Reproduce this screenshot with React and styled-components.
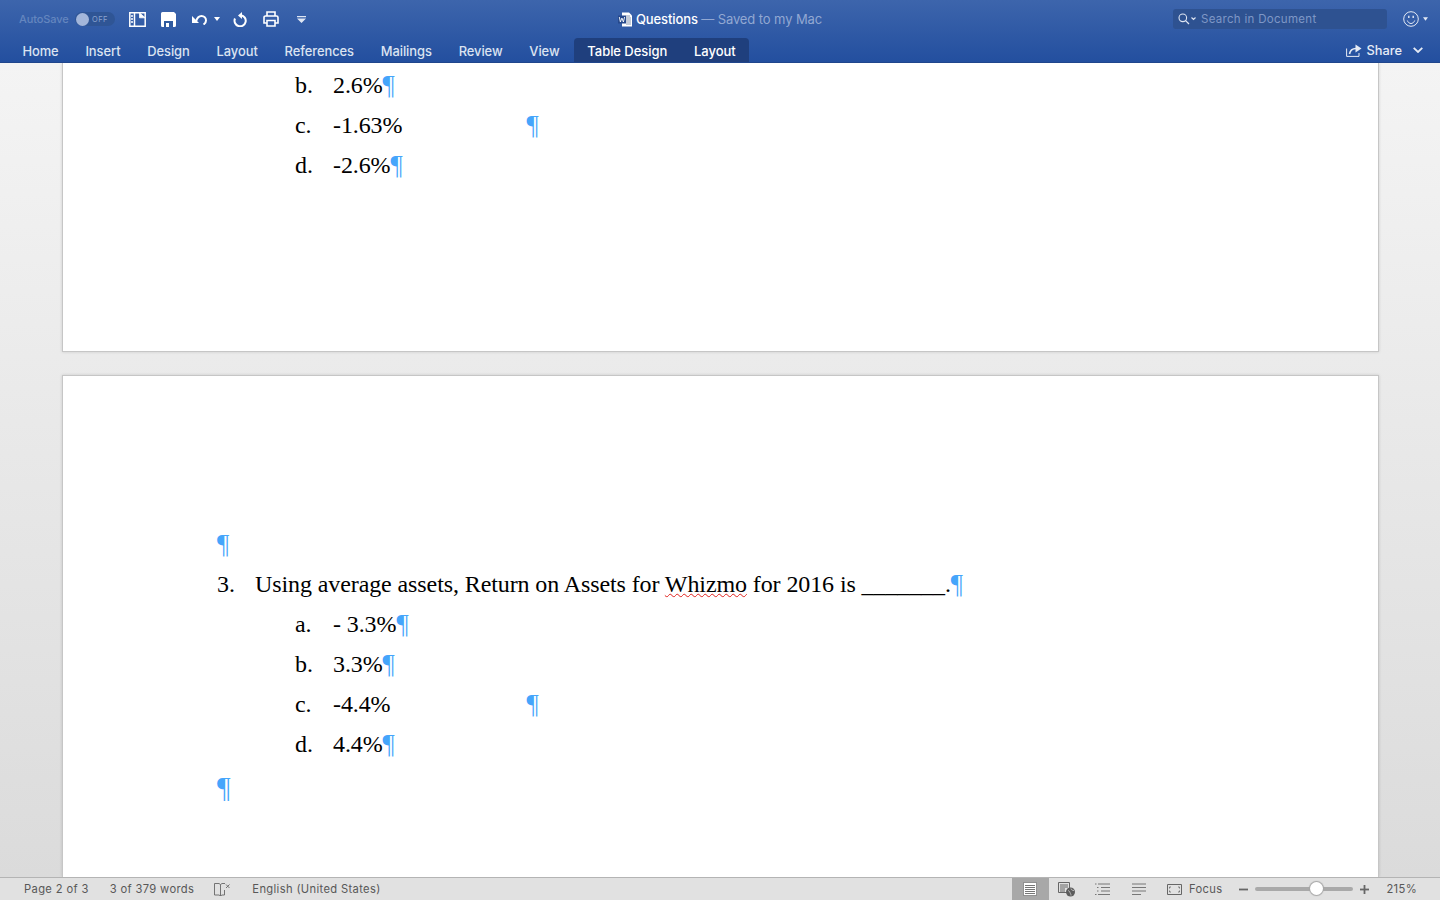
import React from 'react';
import styled, { createGlobalStyle } from 'styled-components';

const GlobalStyle = createGlobalStyle`
  html, body {
    margin: 0;
    height: 100%;
    overflow: hidden;
  }
  #root {
    height: 100%;
  }
`;

const uiFont = `Inter, "Liberation Sans", sans-serif`;

const Window = styled.div`
  height: 900px;
  display: flex;
  flex-direction: column;
  font-family: ${uiFont};
`;

const Ribbon = styled.header`
  height: 63px;
  flex: none;
  display: flex;
  flex-direction: column;
  background: linear-gradient(#3d65ac, #234f9f);
  border-bottom: 1px solid #20468c;
  box-sizing: border-box;
  color: #fff;
`;

const TitleRow = styled.div`
  height: 38px;
  display: grid;
  grid-template-columns: 1fr auto 1fr;
  align-items: center;
`;

const QuickAccess = styled.div`
  display: flex;
  align-items: center;
  padding-left: 19px;
`;

const AutoSave = styled.span`
  font-size: 11px;
  font-weight: 500;
  letter-spacing: -0.1px;
  color: #6486bf;
  width: 56px;
`;

const Toggle = styled.span`
  width: 40px;
  height: 14px;
  border-radius: 7px;
  background: #2f5595;
  display: flex;
  align-items: center;
  gap: 3px;
  font-size: 7.5px;
  letter-spacing: 0.4px;
  color: #8ba3cf;
  margin-right: 14px;
`;

const Knob = styled.i`
  width: 13px;
  height: 13px;
  margin-left: 1px;
  border-radius: 50%;
  background: #a3b6da;
`;

const ToolIcon = styled.svg`
  display: block;
  flex: none;
  margin-left: ${({ $gap }) => $gap || 0}px;
`;

const Title = styled.div`
  display: flex;
  align-items: center;
  font-size: 13px;
  font-weight: 500;
  letter-spacing: -0.1px;
  gap: 3px;
`;

const Saved = styled.span`
  color: #92a8d2;
  font-weight: 400;
`;

const SearchArea = styled.div`
  display: flex;
  justify-content: flex-end;
  align-items: center;
  padding-right: 12px;
`;

const SearchBox = styled.div`
  width: 214px;
  height: 20px;
  border-radius: 3px;
  background: #2e5291;
  display: flex;
  align-items: center;
  padding-left: 5px;
  box-sizing: border-box;
  font-size: 11.5px;
  letter-spacing: 0.3px;
  color: #7e97c6;
  gap: 4px;
  margin-right: 16px;
`;

const TabRow = styled.nav`
  flex: 1;
  display: flex;
  align-items: stretch;
  padding-left: 9px;
`;

const Tab = styled.span`
  padding: 0 13.4px;
  display: flex;
  align-items: center;
  padding-top: 2px;
  font-size: ${({ $active }) => ($active ? 13 : 12.9)}px;
  font-weight: 500;
  letter-spacing: -0.05px;
  color: ${({ $active }) => ($active ? '#fff' : '#dbe3f1')};
`;

const ContextGroup = styled.div`
  display: flex;
  background: #1f3f7d;
  border-radius: 4px 4px 0 0;
  margin-left: 1px;
`;

const ShareArea = styled.div`
  margin-left: auto;
  display: flex;
  align-items: center;
  gap: 5px;
  padding-right: 17px;
  font-size: 12.8px;
  font-weight: 500;
  color: #e6ebf5;
`;

const Canvas = styled.main`
  flex: 1;
  min-height: 0;
  overflow: hidden;
  padding: 0 61px 0 62px;
  display: flex;
  flex-direction: column;
  gap: 23px;
  background: linear-gradient(#f4f4f4, #dbdbdb);
`;

const Page = styled.section`
  flex: ${({ $fill }) => ($fill ? 1 : 'none')};
  height: ${({ $height }) => ($height ? `${$height}px` : 'auto')};
  box-sizing: border-box;
  background: #fff;
  border: 1px solid #c6c6c6;
  border-top-width: ${({ $open }) => ($open ? 0 : 1)}px;
  border-bottom-width: ${({ $fill }) => ($fill ? 0 : 1)}px;
  box-shadow: 0 0 3px rgba(0, 0, 0, 0.14);
  padding: ${({ $top }) => $top}px 0 0 154px;
  font-family: "Liberation Serif", "Times New Roman", serif;
  font-size: 24px;
  letter-spacing: -0.1px;
  color: #000;
`;

const Row = styled.div`
  height: 40px;
  display: flex;
  align-items: center;
  padding-left: ${({ $indent }) => $indent || 0}px;
  white-space: pre;
  margin-top: ${({ $shift }) => $shift || 0}px;
`;

const Marker = styled.span`
  width: 38px;
  flex: none;
`;

const Body = styled.span`
  width: ${({ $tab }) => ($tab ? `${$tab}px` : 'auto')};
`;

const Pilcrow = styled.span`
  color: #45a5fb;
  font-size: ${({ $big }) => ($big ? 30 : 27)}px;
  line-height: 1;
  letter-spacing: 0;
`;

const Misspelt = styled.span`
  text-decoration: underline wavy #e0201c 1px;
  text-underline-offset: 1px;
`;

const StatusBar = styled.footer`
  height: 23px;
  flex: none;
  box-sizing: border-box;
  background: #e1e1e1;
  border-top: 1px solid #b4b4b4;
  display: flex;
  align-items: center;
  padding-left: 24px;
  font-size: 11.2px;
  letter-spacing: 0.35px;
  color: #585858;
`;

const StatusText = styled.span`
  margin-right: ${({ $gap }) => $gap || 0}px;
`;

const Language = styled.span`
  margin-left: 21px;
`;

const ViewControls = styled.div`
  margin-left: auto;
  display: flex;
  align-items: center;
  height: 100%;
`;

const ViewButton = styled.span`
  height: 100%;
  width: ${({ $width }) => $width}px;
  display: flex;
  align-items: center;
  justify-content: center;
  background: ${({ $active }) => ($active ? '#a8a8a8' : 'transparent')};
`;

const FocusLabel = styled.span`
  margin: 0 17px 0 7px;
`;

const Slider = styled.span`
  position: relative;
  width: 98px;
  height: 4px;
  border-radius: 2px;
  background: #a9a9a9;
  margin: 0 7px;
`;

const Thumb = styled.i`
  position: absolute;
  left: 55px;
  top: -5px;
  width: 13px;
  height: 13px;
  border-radius: 50%;
  background: #fff;
  box-shadow: 0 0 1px 1px #a5a5a5;
`;

const Zoom = styled.span`
  margin: 0 23px 0 17px;
`;

const PanelIcon = () => (
  <ToolIcon width="17" height="15" viewBox="0 0 17 15" fill="none" stroke="#fff" strokeWidth="1.500">
    <path d="M.8.8h15.400v13.400H.8z" />
    <path d="M5.500.8v13.400" />
    <path d="M2 4h2M2 7h2M2 10h2" strokeWidth="1.300" />
    <path d="M10.500.8v5h5.700z" fill="#fff" strokeWidth="0.800" />
  </ToolIcon>
);

const SaveIcon = () => (
  <ToolIcon $gap={15} width="15" height="15" viewBox="0 0 15 15">
    <path fill="#fff" d="M1.500 0H13l2 2v11.500a1.500 1.500 0 0 1-1.500 1.500h-12A1.500 1.500 0 0 1 0 13.500v-12A1.500 1.500 0 0 1 1.500 0z" />
    <path fill="#2f5a9f" d="M3 9h9v6H3z" />
    <path fill="#fff" d="M5 11h3v4H5z" />
  </ToolIcon>
);

const UndoIcon = () => (
  <ToolIcon $gap={16} width="15" height="12" viewBox="0 0 15 12" fill="none">
    <path d="M4 8.500c1-3.500 3-5.500 5.500-5.500S14 5 14 7.500c0 1.500-.8 3-2.500 4" stroke="#fff" strokeWidth="2" />
    <path fill="#fff" d="M0 3l7 7H0z" />
  </ToolIcon>
);

const Caret = ({ gap = 7, color = '#fff', w = 6 }) => (
  <ToolIcon $gap={gap} width={w} height="4" viewBox="0 0 6 4">
    <path fill={color} d="M0 0h6L3 4z" />
  </ToolIcon>
);

const RedoIcon = () => (
  <ToolIcon $gap={13} width="14" height="15" viewBox="0 0 14 15" fill="none">
    <path d="M8 3.200A5.600 5.600 0 1 1 2 6.500" stroke="#fff" strokeWidth="2" />
    <path fill="#fff" d="M9 0v7L5 3.500z" />
  </ToolIcon>
);

const PrintIcon = () => (
  <ToolIcon $gap={16} width="16" height="16" viewBox="0 0 16 16" fill="none" stroke="#fff" strokeWidth="1.600">
    <path d="M4 5V1h8v4" />
    <path d="M4 12H1V6.500A1.500 1.500 0 0 1 2.500 5h11A1.500 1.500 0 0 1 15 6.500V12h-3" />
    <path d="M4 9.500h8V15H4z" />
  </ToolIcon>
);

const CustomizeIcon = () => (
  <ToolIcon $gap={18} width="9" height="7" viewBox="0 0 9 7">
    <path fill="#dfe6f3" d="M0 0h9v1.200H0zM0 2.500h9L4.500 7z" />
  </ToolIcon>
);

const DocIcon = () => (
  <ToolIcon width="15" height="15" viewBox="0 0 15 15">
    <path fill="#fff" d="M4 .5h7l3 3V14.500H4z" />
    <path d="M8 4h4M8 6h5M8 8h5M8 10h5M8 12h5" stroke="#6b7da0" strokeWidth="0.800" />
    <path fill="#26498c" d="M0 3.500h8v8H0z" />
    <path fill="none" stroke="#fff" strokeWidth="0.900" d="M1.300 5l1.100 5 1.500-4 1.500 4 1.200-5" />
  </ToolIcon>
);

const SearchIcon = () => (
  <ToolIcon width="19" height="12" viewBox="0 0 19 12" fill="none" stroke="#dfe6f3">
    <circle cx="4.800" cy="4.800" r="3.800" strokeWidth="1.100" />
    <path d="M7.600 7.600L11 11" strokeWidth="1.300" />
    <path d="M13.500 4.500L15.500 6.500 17.500 4.500" strokeWidth="1.100" />
  </ToolIcon>
);

const SmileIcon = () => (
  <ToolIcon width="16" height="16" viewBox="0 0 16 16" fill="none" stroke="#e4eaf5" strokeWidth="1">
    <circle cx="8" cy="8" r="7.300" />
    <path d="M4.300 9.500c.8 2 2.200 3 3.700 3s2.900-1 3.700-3" />
    <path d="M5.800 4.800v2.300M10.200 4.800v2.300" strokeWidth="1.400" />
  </ToolIcon>
);

const ShareIcon = () => (
  <ToolIcon width="16" height="14" viewBox="0 0 16 14" fill="none" stroke="#e6ebf5">
    <path d="M.6 5.500V13.400H13V10" strokeWidth="1" />
    <path d="M3.500 11c.6-3.500 3-5.500 6.500-5.500" strokeWidth="1.600" />
    <path fill="#e6ebf5" stroke="none" d="M9.500 1.500L15.500 5.500 9.500 9.500z" />
  </ToolIcon>
);

const Chevron = () => (
  <ToolIcon $gap={6} width="10" height="6" viewBox="0 0 10 6" fill="none" stroke="#e6ebf5" strokeWidth="1.800">
    <path d="M.7.8L5 5l4.300-4.200" />
  </ToolIcon>
);

const BookIcon = () => (
  <ToolIcon width="17" height="13" viewBox="0 0 17 13" fill="none" stroke="#666">
    <path d="M.5.500h4.500l1.500 1v11.500l-1.500-1H.5zM6.500 1.500l1.500-1h3M6.500 13l1.500-1h2.500V7" strokeWidth="0.900" />
    <path d="M12 1.500l3.500 3.500M15.500 1.500L12 5" strokeWidth="0.900" />
  </ToolIcon>
);

const PrintLayoutIcon = () => (
  <ToolIcon width="14" height="14" viewBox="0 0 14 14">
    <path fill="#fff" stroke="#666" strokeWidth="0.600" d="M.5.500h13v13H.5z" />
    <path stroke="#777" strokeWidth="1" d="M2 3.500h10M2 5.500h10M2 7.500h10M2 9.500h10M2 11.500h10" />
  </ToolIcon>
);

const WebLayoutIcon = () => (
  <ToolIcon width="17" height="15" viewBox="0 0 17 15" fill="none">
    <path stroke="#666" strokeWidth="1" d="M.5.500h11v10H.5zM2 3h8M2 5h8M2 7h5M2 9h5" />
    <circle cx="12.500" cy="10" r="4.500" fill="#5c5c5c" />
    <path stroke="#e1e1e1" strokeWidth="0.700" d="M10 8.500c1 .5 2 1 2 2s1 1 1 3M13 6.500c0 1 1 2 3 2" />
  </ToolIcon>
);

const OutlineIcon = () => (
  <ToolIcon width="16" height="12" viewBox="0 0 16 12" stroke="#777" strokeWidth="1" fill="none">
    <path d="M0 1h1.500M3 1h12M2 4.500h1.500M6 4.500h9M2 8h1.500M6 8h9M0 11.500h1.500M3 11.500h12" />
  </ToolIcon>
);

const DraftIcon = () => (
  <ToolIcon width="14" height="12" viewBox="0 0 14 12" stroke="#777" strokeWidth="1" fill="none">
    <path d="M0 1h14M0 4.500h14M0 8h14M0 11.500h9" />
  </ToolIcon>
);

const FocusIcon = () => (
  <ToolIcon $gap={10} width="15" height="11" viewBox="0 0 15 11" stroke="#666" strokeWidth="1" fill="none">
    <path d="M.5.500h14v10H.5z" />
    <path d="M4 3H2.500v1.500M11 3h1.500v1.500M4 8H2.500V6.500M11 8h1.500V6.500" strokeWidth="0.800" />
  </ToolIcon>
);

const ZoomButton = ({ plus }) => (
  <ToolIcon width="9" height="9" viewBox="0 0 9 9" stroke="#666" strokeWidth="1.800">
    <path d="M0 4.500h9" />
    {plus && <path d="M4.500 0v9" />}
  </ToolIcon>
);

const tabs = ['Home', 'Insert', 'Design', 'Layout', 'References', 'Mailings', 'Review', 'View'];

function Option({ marker, text, tab }) {
  return (
    <Row $indent={78}>
      <Marker>{marker}</Marker>
      <Body $tab={tab}>{text}</Body>
      <Pilcrow>¶</Pilcrow>
    </Row>
  );
}

export default function App() {
  return (
    <>
      <GlobalStyle />
      <Window>
        <Ribbon>
          <TitleRow>
            <QuickAccess>
              <AutoSave>AutoSave</AutoSave>
              <Toggle>
                <Knob />
                OFF
              </Toggle>
              <PanelIcon />
              <SaveIcon />
              <UndoIcon />
              <Caret />
              <RedoIcon />
              <PrintIcon />
              <CustomizeIcon />
            </QuickAccess>
            <Title>
              <DocIcon />
              <span>
                Questions <Saved>— Saved to my Mac</Saved>
              </span>
            </Title>
            <SearchArea>
              <SearchBox>
                <SearchIcon />
                Search in Document
              </SearchBox>
              <SmileIcon />
              <Caret gap={4} color="#e4eaf5" w={5} />
            </SearchArea>
          </TitleRow>
          <TabRow>
            {tabs.map(tab => (
              <Tab key={tab}>{tab}</Tab>
            ))}
            <ContextGroup>
              <Tab $active>Table Design</Tab>
              <Tab $active>Layout</Tab>
            </ContextGroup>
            <ShareArea>
              <ShareIcon />
              Share
              <Chevron />
            </ShareArea>
          </TabRow>
        </Ribbon>
        <Canvas>
          <Page $open $height={289} $top={2}>
            <Option marker="b." text="2.6%" />
            <Option marker="c." text="-1.63%" tab={193.5} />
            <Option marker="d." text="-2.6%" />
          </Page>
          <Page $fill $top={148}>
            <Row>
              <Pilcrow>¶</Pilcrow>
            </Row>
            <Row>
              <Marker>3.</Marker>
              <Body>
                Using average assets, Return on Assets for <Misspelt>Whizmo</Misspelt> for 2016 is _______.
              </Body>
              <Pilcrow>¶</Pilcrow>
            </Row>
            <Option marker="a." text="- 3.3%" />
            <Option marker="b." text="3.3%" />
            <Option marker="c." text="-4.4%" tab={193.5} />
            <Option marker="d." text="4.4%" />
            <Row $shift={3}>
              <Pilcrow $big>¶</Pilcrow>
            </Row>
          </Page>
        </Canvas>
        <StatusBar>
          <StatusText $gap={21}>Page 2 of 3</StatusText>
          <StatusText $gap={20}>3 of 379 words</StatusText>
          <BookIcon />
          <Language>English (United States)</Language>
          <ViewControls>
            <ViewButton $width={37} $active>
              <PrintLayoutIcon />
            </ViewButton>
            <ViewButton $width={36}>
              <WebLayoutIcon />
            </ViewButton>
            <ViewButton $width={36}>
              <OutlineIcon />
            </ViewButton>
            <ViewButton $width={36}>
              <DraftIcon />
            </ViewButton>
            <FocusIcon />
            <FocusLabel>Focus</FocusLabel>
            <ZoomButton />
            <Slider>
              <Thumb />
            </Slider>
            <ZoomButton plus />
            <Zoom>215%</Zoom>
          </ViewControls>
        </StatusBar>
      </Window>
    </>
  );
}
